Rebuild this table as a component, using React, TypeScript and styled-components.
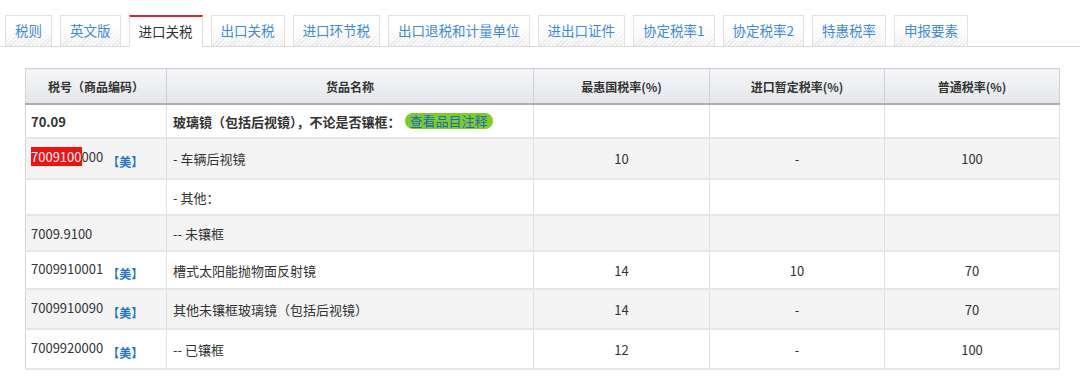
import React from "react";
import styled, { createGlobalStyle } from "styled-components";

const GlobalStyle = createGlobalStyle`
  body {
    margin: 0;
    background: #fff;
    font-family: "Noto Sans CJK SC", "Noto Sans", sans-serif;
    color: #333;
  }
`;

const tabs = [
  "税则",
  "英文版",
  "进口关税",
  "出口关税",
  "进口环节税",
  "出口退税和计量单位",
  "进出口证件",
  "协定税率1",
  "协定税率2",
  "特惠税率",
  "申报要素",
];
const activeTab = "进口关税";

type Row = {
  code?: string;
  mark?: number;
  link?: boolean;
  name: string;
  bold?: boolean;
  note?: boolean;
  mfn?: string;
  temp?: string;
  general?: string;
  h: number;
};

const rows: Row[] = [
  { code: "70.09", name: "玻璃镜（包括后视镜），不论是否镶框：", bold: true, note: true, h: 34 },
  { code: "7009100000", mark: 7, link: true, name: "- 车辆后视镜", mfn: "10", temp: "-", general: "100", h: 41 },
  { name: "- 其他：", h: 36 },
  { code: "7009.9100", name: "-- 未镶框", h: 36 },
  { code: "7009910001", link: true, name: "槽式太阳能抛物面反射镜", mfn: "14", temp: "10", general: "70", h: 38 },
  { code: "7009910090", link: true, name: "其他未镶框玻璃镜（包括后视镜）", mfn: "14", temp: "-", general: "70", h: 40 },
  { code: "7009920000", link: true, name: "-- 已镶框", mfn: "12", temp: "-", general: "100", h: 40 },
];

const columns = [
  { title: "税号（商品编码）", width: 141 },
  { title: "货品名称", width: 367 },
  { title: "最惠国税率(%)", width: 176 },
  { title: "进口暂定税率(%)", width: 175 },
  { title: "普通税率(%)", width: 175 },
];

export default function App() {
  return (
    <Page>
      <GlobalStyle />
      <TabBar>
        {tabs.map((t) => (
          <Tab key={t} $active={t === activeTab}>
            {t}
          </Tab>
        ))}
      </TabBar>
      <Table>
        <colgroup>
          {columns.map((c) => (
            <col key={c.title} style={{ width: c.width }} />
          ))}
        </colgroup>
        <thead>
          <tr>
            {columns.map((c) => (
              <Th key={c.title}>{c.title}</Th>
            ))}
          </tr>
        </thead>
        <tbody>
          {rows.map((r, i) => (
            <Tr key={i} $h={r.h} $alt={i % 2 === 1}>
              <Td $bold={r.bold} $pad={5}>
                {r.code && r.mark ? (
                  <>
                    <Mark>{r.code.slice(0, r.mark)}</Mark>
                    {r.code.slice(r.mark)}
                  </>
                ) : (
                  r.code
                )}
                {r.link && <Link>【美】</Link>}
              </Td>
              <Td $bold={r.bold} $pad={6}>
                {r.name}
                {r.note && <Badge>查看品目注释</Badge>}
              </Td>
              <Td $center>{r.mfn}</Td>
              <Td $center>{r.temp}</Td>
              <Td $center>{r.general}</Td>
            </Tr>
          ))}
        </tbody>
      </Table>
    </Page>
  );
}

const Page = styled.div`
  width: 1080px;
  height: 378px;
  overflow: hidden;
`;

const TabBar = styled.div`
  display: flex;
  align-items: flex-end;
  gap: 8px;
  padding: 15px 0 0 5px;
  border-bottom: 1px solid #d9d9d9;
`;

const Tab = styled.div<{ $active?: boolean }>`
  box-sizing: border-box;
  height: ${(p) => (p.$active ? "32px" : "31px")};
  margin-bottom: ${(p) => (p.$active ? "-1px" : "0")};
  padding: 0 9px;
  border: 1px solid #e2e2e2;
  border-top: ${(p) => (p.$active ? "2px solid #d8262e" : "1px solid #e2e2e2")};
  border-bottom: none;
  font-size: 13.5px;
  line-height: 29px;
  white-space: nowrap;
  color: ${(p) => (p.$active ? "#333" : "#3f8bd6")};
  background: ${(p) =>
    p.$active
      ? "#fff"
      : "linear-gradient(to bottom, #fff 35%, rgba(255,255,255,0.2) 100%), repeating-linear-gradient(135deg, #dedede 0 1px, #f7f7f7 1px 3px)"};
`;

const Table = styled.table`
  margin: 21px 0 0 25px;
  width: 1034px;
  border-collapse: collapse;
  table-layout: fixed;
  font-size: 13px;
  border-left: 1px solid #d4d4d4;
  border-right: 1px solid #d8d8d8;
`;

const Th = styled.th`
  height: 34px;
  padding: 0;
  font-size: 12px;
  font-weight: bold;
  color: #333;
  text-align: center;
  background: linear-gradient(#f6f7f9, #e4e6ea);
  border-top: 1px solid #d2d2d2;
  border-bottom: 2px solid #a9aeb6;
  border-right: 1px solid #cdd0d5;
`;

const Tr = styled.tr<{ $h: number; $alt: boolean }>`
  height: ${(p) => p.$h}px;
  background: ${(p) => (p.$alt ? "#f4f4f4" : "#fff")};
`;

const Td = styled.td<{ $bold?: boolean; $center?: boolean; $pad?: number }>`
  padding: 0 ${(p) => p.$pad ?? 6}px;
  border-bottom: 2px solid #e6e6e6;
  border-right: 1px solid #e0e0e0;
  text-align: ${(p) => (p.$center ? "center" : "left")};
  vertical-align: middle;
  font-weight: ${(p) => (p.$bold ? "bold" : "normal")};
  color: #333;
  white-space: nowrap;
`;

const Mark = styled.span`
  background: #f50f0f;
  color: #fff;
`;

const Link = styled.span`
  margin-left: 4px;
  font-size: 12px;
  font-weight: bold;
  color: #1f74c6;
  vertical-align: -5px;
`;

const Badge = styled.span`
  display: inline-block;
  margin-left: 4px;
  padding: 0 5px;
  height: 16px;
  line-height: 16px;
  border-radius: 8px;
  background: #7ccf22;
  color: #1d68c4;
  font-size: 13px;
  font-weight: normal;
  vertical-align: 1px;
`;
